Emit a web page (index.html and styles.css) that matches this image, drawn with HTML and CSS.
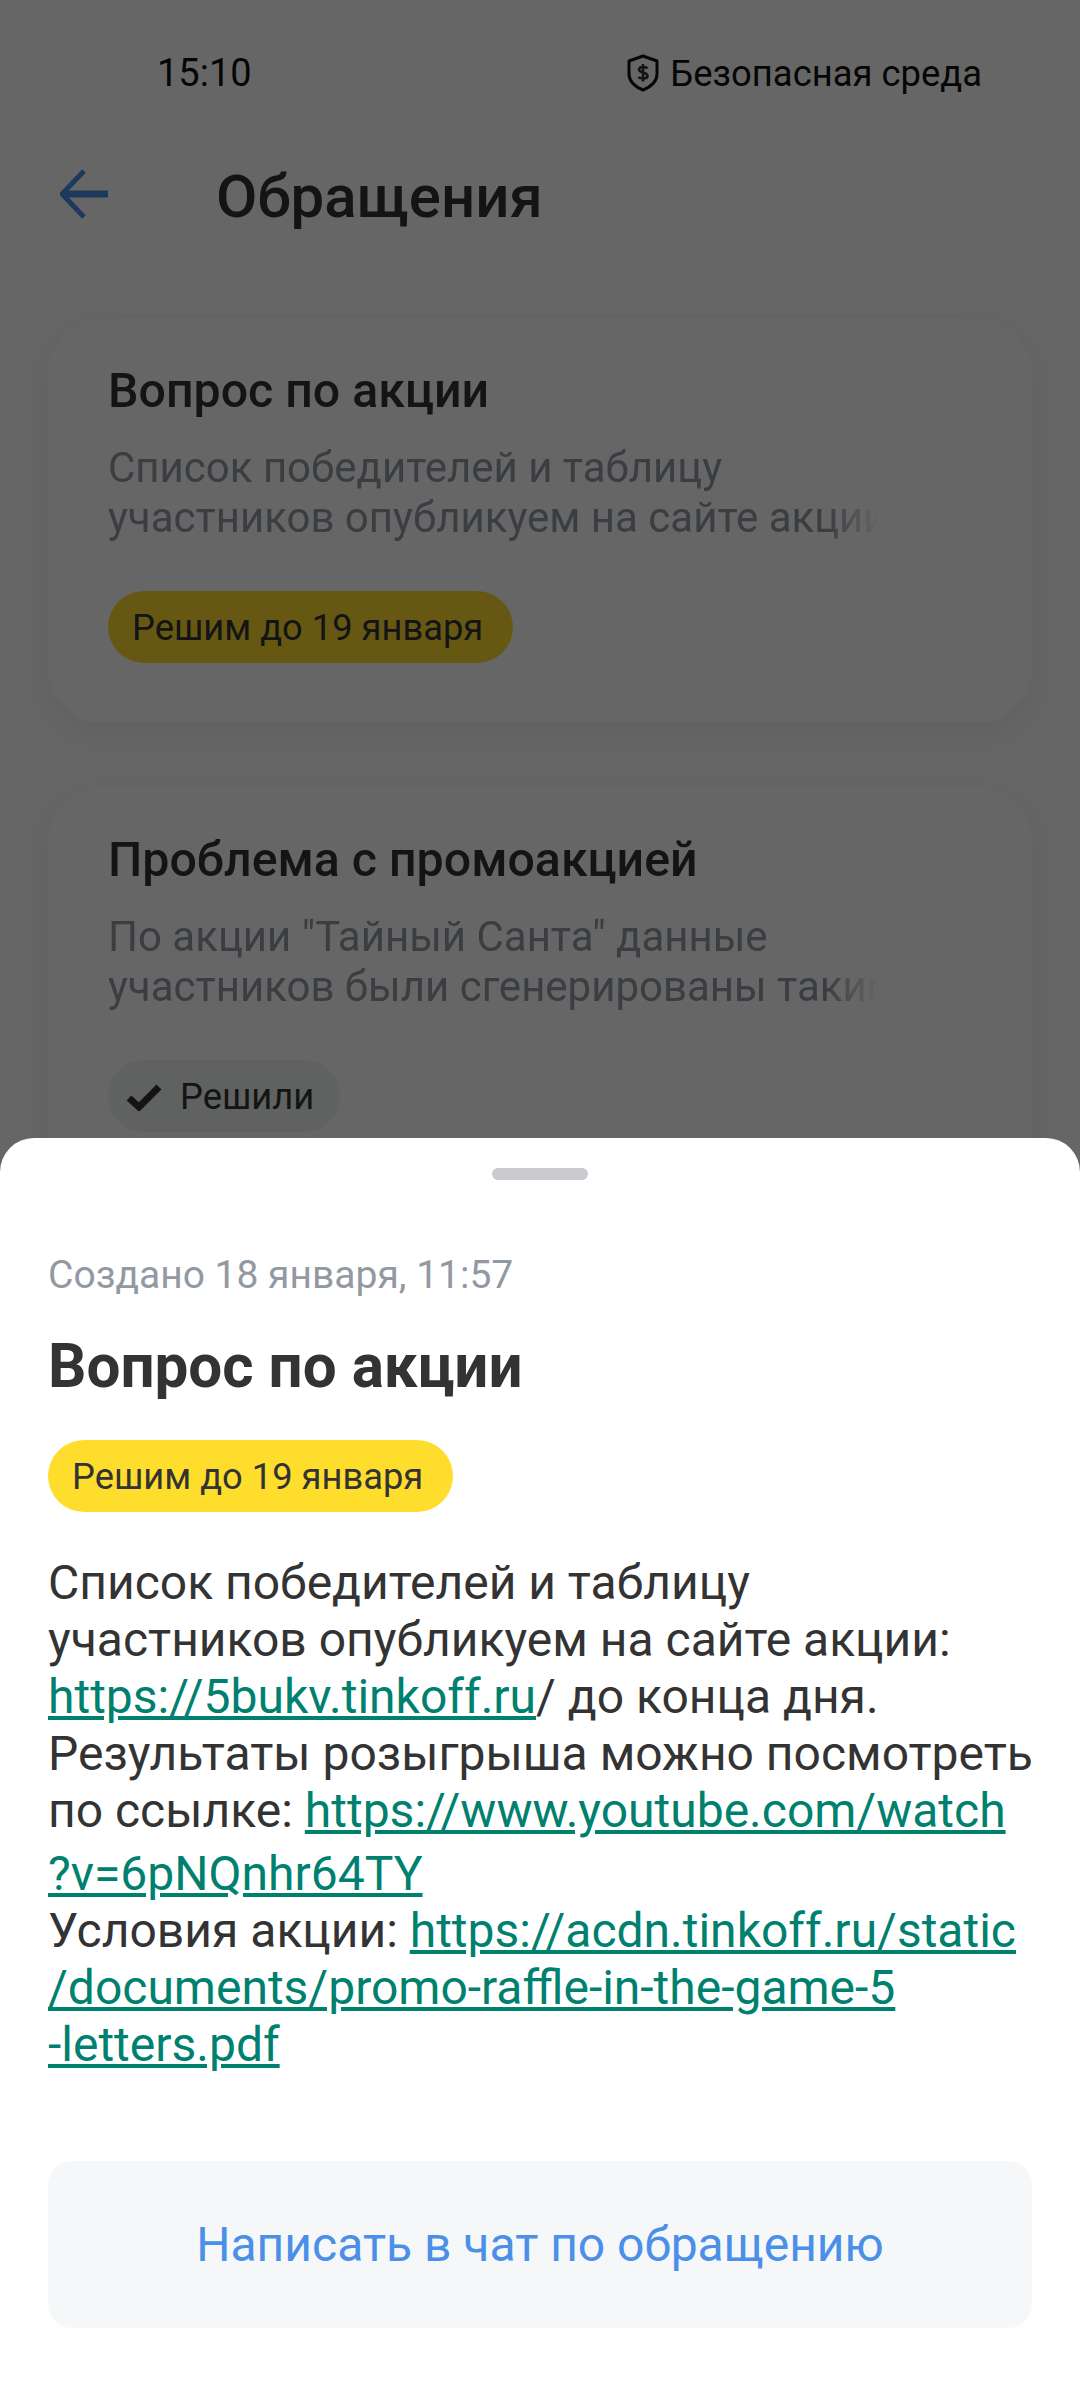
FILE: index.html
```html
<!DOCTYPE html>
<html lang="ru">
<head>
    <meta charset="UTF-8">
    <meta name="viewport" content="width=device-width, initial-scale=1.0">
    <title>Обращения</title>
    <link rel="stylesheet" href="styles.css">
</head>
<body>
    <div class="screen">
        <div class="status-bar">
            <span class="status-time">15:10</span>
            <div class="status-safe">
                <svg class="shield" viewBox="0 0 34 38" fill="none">
                    <path d="M17 2 L31 7 V20 C31 28 24 33 17 36 C10 33 3 28 3 20 V7 Z" stroke="#111" stroke-width="3" stroke-linejoin="round"/>
                    <path d="M21.5 14.5 C20.5 12.8 13 12 13 15.5 C13 19.5 21.5 17.5 21.5 22 C21.5 25.5 14 24.8 12.5 23 M17 10 V27.5" stroke="#333" stroke-width="2.6"/>
                </svg>
                <span>Безопасная среда</span>
            </div>
        </div>

        <div class="top-bar">
            <svg class="back" viewBox="0 0 50 50" fill="none">
                <path d="M24 2 L2 25 L24 48" stroke="#4a8fe8" stroke-width="5"/>
                <path d="M4 25 H48" stroke="#4a8fe8" stroke-width="7"/>
            </svg>
            <h1>Обращения</h1>
        </div>

        <div class="card">
            <h2>Вопрос по акции</h2>
            <div class="card-text">
                <div>Список победителей и таблицу</div>
                <div>участников опубликуем на сайте акции</div>
            </div>
            <span class="chip chip-yellow">Решим до 19 января</span>
        </div>

        <div class="card">
            <h2>Проблема с промоакцией</h2>
            <div class="card-text">
                <div>По акции "Тайный Санта" данные</div>
                <div>участников были сгенерированы таким</div>
            </div>
            <span class="chip chip-gray">
                <svg class="check" viewBox="0 0 36 30" fill="none">
                    <path d="M3 17 L13 26 L33 6" stroke="#333" stroke-width="7"/>
                </svg>
                Решили
            </span>
        </div>
    </div>

    <div class="overlay"></div>

    <div class="sheet">
        <div class="handle"></div>
        <div class="created">Создано 18 января, 11:57</div>
        <div class="sheet-title">Вопрос по акции</div>
        <span class="chip chip-yellow">Решим до 19 января</span>
        <div class="sheet-text">
            <div>Список победителей и таблицу</div>
            <div>участников опубликуем на сайте акции:</div>
            <div><a href="#">https://5bukv.tinkoff.ru</a>/ до конца дня.</div>
            <div>Результаты розыгрыша можно посмотреть</div>
            <div>по ссылке: <a href="#">https://www.youtube.com/watch</a></div>
            <div class="line-gap"><a href="#">?v=6pNQnhr64TY</a></div>
            <div>Условия акции: <a href="#">https://acdn.tinkoff.ru/static</a></div>
            <div><a href="#">/documents/promo-raffle-in-the-game-5</a></div>
            <div><a href="#">-letters.pdf</a></div>
        </div>
        <button class="chat-btn">Написать в чат по обращению</button>
    </div>
</body>
</html>
```

FILE: styles.css
```css
* {
    box-sizing: border-box;
}

html, body {
    margin: 0;
    height: 2400px;
    overflow: hidden;
}

body {
    position: relative;
    width: 1080px;
    font-family: Roboto, "Noto Sans", sans-serif;
    background-color: #fff;
    color: #333;
}

.status-bar {
    display: flex;
    justify-content: space-between;
    align-items: center;
    height: 46px;
    margin-top: 50px;
    padding: 0 98px 0 157px;
    font-size: 36.4px;
    color: #111;
}

.status-time {
    font-size: 38px;
}

.status-safe {
    display: flex;
    align-items: center;
    gap: 10px;
}

.shield {
    width: 34px;
    height: 38px;
}

.top-bar {
    display: flex;
    align-items: center;
    height: 60px;
    margin-top: 70px;
    padding-left: 60px;
}

.back {
    width: 50px;
    height: 50px;
    margin-bottom: 4px;
}

h1 {
    margin: 0 0 0 106px;
    font-size: 60px;
    font-weight: 500;
    color: #333;
}

.card {
    margin: 92px 48px 0;
    padding: 43px 60px 60px;
    height: 405px;
    border-radius: 56px;
    background-color: #fff;
    box-shadow: 0 10px 36px rgba(0,0,0,0.07);
}

.card + .card {
    margin-top: 64px;
}

h2 {
    margin: 0;
    font-size: 48.3px;
    line-height: 60px;
    font-weight: 500;
    color: #333;
}

.card-text {
    width: 772px;
    margin-top: 22px;
    font-size: 42px;
    line-height: 50px;
    color: #9299a2;
    white-space: nowrap;
    overflow: hidden;
    -webkit-mask-image: linear-gradient(to right, #000 93%, transparent 100%);
    mask-image: linear-gradient(to right, #000 93%, transparent 100%);
}

.chip {
    display: inline-flex;
    align-items: center;
    height: 72px;
    padding: 0 30px 0 24px;
    border-radius: 36px;
    font-size: 36.3px;
    color: #333;
}

.card .chip {
    margin-top: 48px;
}

.chip-yellow {
    background-color: #ffdd2d;
}

.chip-gray {
    background-color: #f0f4f3;
    padding: 0 26px 0 18px;
    gap: 18px;
}

.check {
    width: 36px;
    height: 30px;
}

.overlay {
    position: absolute;
    inset: 0;
    background-color: rgba(0,0,0,0.6);
}

.sheet {
    position: absolute;
    left: 0;
    right: 0;
    bottom: 0;
    height: 1262px;
    padding: 0 48px;
    background-color: #fff;
    border-radius: 34px 34px 0 0;
}

.handle {
    width: 96px;
    height: 12px;
    margin: 30px auto 0;
    border-radius: 6px;
    background-color: #c9cbcf;
}

.created {
    margin-top: 71px;
    font-size: 39px;
    line-height: 48px;
    color: #9299a2;
}

.sheet-title {
    margin: 33px 0 38px;
    font-size: 60.2px;
    line-height: 70px;
    font-weight: 700;
    color: #333;
}

.sheet .chip {
    display: flex;
    width: fit-content;
}

.sheet-text {
    margin-top: 42px;
    font-size: 48px;
    line-height: 57px;
    color: #333;
    white-space: nowrap;
}

.sheet-text a {
    color: #00806f;
    text-decoration: underline;
}

.line-gap {
    margin-top: 6px;
}

.chat-btn {
    display: block;
    width: 100%;
    height: 167px;
    margin-top: 88px;
    border: none;
    border-radius: 24px;
    background-color: #f6f7f8;
    font-family: inherit;
    font-size: 48px;
    color: #4a8fe8;
}
```
